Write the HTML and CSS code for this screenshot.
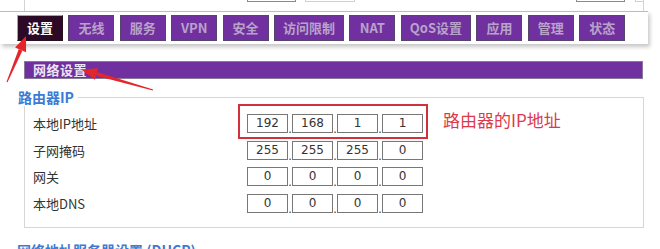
FILE: index.html
```html
<!DOCTYPE html>
<html lang="zh-CN">
<head>
  <meta charset="UTF-8">
  <title>路由器设置</title>
  <link rel="stylesheet" href="styles.css">
</head>
<body>
  <div class="top">
    <span class="stub s1"></span>
    <span class="stub s2"></span>
    <span class="stub s3"></span>
    <span class="stub s4"></span>
  </div>

  <div class="tabbar">
    <a class="tab active">设置</a>
    <a class="tab">无线</a>
    <a class="tab">服务</a>
    <a class="tab">VPN</a>
    <a class="tab">安全</a>
    <a class="tab">访问限制</a>
    <a class="tab">NAT</a>
    <a class="tab">QoS设置</a>
    <a class="tab">应用</a>
    <a class="tab">管理</a>
    <a class="tab">状态</a>
  </div>

  <div class="content">
    <div class="section-title">网络设置</div>

    <div class="group">
      <div class="legend">路由器IP</div>
      <div class="rows">
        <div class="row">
          <span class="label">本地IP地址</span>
          <span class="ip marked">
            <span class="oct">192</span><span class="dot">.</span><span class="oct">168</span><span class="dot">.</span><span class="oct">1</span><span class="dot">.</span><span class="oct">1</span>
          </span>
          <span class="note">路由器的IP地址</span>
        </div>
        <div class="row">
          <span class="label">子网掩码</span>
          <span class="ip">
            <span class="oct">255</span><span class="dot">.</span><span class="oct">255</span><span class="dot">.</span><span class="oct">255</span><span class="dot">.</span><span class="oct">0</span>
          </span>
        </div>
        <div class="row">
          <span class="label">网关</span>
          <span class="ip">
            <span class="oct">0</span><span class="dot">.</span><span class="oct">0</span><span class="dot">.</span><span class="oct">0</span><span class="dot">.</span><span class="oct">0</span>
          </span>
        </div>
        <div class="row">
          <span class="label">本地DNS</span>
          <span class="ip">
            <span class="oct">0</span><span class="dot">.</span><span class="oct">0</span><span class="dot">.</span><span class="oct">0</span><span class="dot">.</span><span class="oct">0</span>
          </span>
        </div>
      </div>
    </div>

    <div class="legend next">网络地址服务器设置 (DHCP)</div>
  </div>

  <!-- annotation arrows -->
  <svg class="arrows" width="660" height="249" viewBox="0 0 660 249">
    <polygon fill="#e3262b" points="6.5,81.8 7.5,82.2 22.4,50.7 18.8,49.1"/>
    <polygon fill="#e3262b" points="26,36 26.1,52.2 15.1,47.6"/>
    <polygon fill="#e3262b" points="152.8,90.6 153.2,89.4 97.05,71.98 95.95,75.8"/>
    <polygon fill="#e3262b" points="82,70 98.15,68.1 94.85,79.7"/>
  </svg>
</body>
</html>
```

FILE: styles.css
```css
body { margin: 0; background: #fff; font-family: "Noto Sans CJK SC", "Noto Sans", sans-serif; color: #333; position: relative; width: 660px; height: 249px; overflow: hidden; }

/* strip left over from the frame above */
.top { margin-left: 24px; width: 618px; height: 11px; border-left: 1px solid #d4d4d4; border-right: 1px solid #d4d4d4; display: flex; align-items: flex-start; }
.stub { display: block; height: 1px; border: 1px solid #8a8a8a; border-top: none; }
.s1 { margin-left: 222px; width: 47px; }
.s2 { margin-left: 9px; width: 48px; border-color: #d0d0d0; }
.s3 { margin-left: 221px; width: 47px; }
.s4 { margin-left: 10px; flex: 1; border-color: #d0d0d0; border-right: none; }

.tabbar { width: 648px; box-sizing: border-box; height: 33px; padding: 3px 0 0 17px; border-top: 1px solid #bdbdbd; display: flex; gap: 5.4px; box-shadow: 2px 3px 4px rgba(0,0,0,0.22); }
.tab { box-sizing: border-box; min-width: 46px; height: 26px; padding: 0 8px; background: #7030a0; border: 1px solid #55456a; color: #b9a2c9; font-weight: bold; font-size: 13px; line-height: 24px; text-align: center; }
.tab.active { background: #2c0a25; color: #fff; border-color: #27101f; border-left-color: #8ea6d2; border-top-color: #8ea6d2; }

.content { padding-top: 17px; }
.section-title { margin-left: 24px; width: 619px; height: 18px; box-sizing: border-box; background: #7030a0; border: 1px solid #8a7a9a; color: #ece4f4; font-weight: bold; font-size: 13px; line-height: 16px; padding-left: 8px; letter-spacing: 0.5px; }

.group { margin: 18px 0 0 24px; width: 618px; border: 1px solid #d6d6d6; padding: 0 0 14px; }
.legend { width: fit-content; height: 17px; margin: -9px 0 0 -7px; padding-right: 4px; background: #fff; color: #3a7bd5; font-weight: bold; font-size: 14px; line-height: 17px; }
.legend.next { margin: 14px 0 0 17px; }

.rows { display: grid; row-gap: 7.67px; padding: 0 0 0 8px; margin-top: 8px; }
.row { display: flex; align-items: center; height: 19px; }
.label { width: 214px; font-size: 13px; color: #333; }
.ip { display: flex; align-items: flex-end; position: relative; }
.oct { box-sizing: border-box; width: 41px; height: 19px; border: 1px solid #777; font-family: "DejaVu Sans", sans-serif; font-size: 12px; line-height: 17px; text-align: center; color: #333; }
.dot { width: 4px; font-size: 11px; line-height: 10px; text-align: center; color: #333; }
.ip.marked::after { content: ""; position: absolute; top: -10px; left: -9px; right: -5px; bottom: -6px; border: 2px solid #d2303c; }
.note { margin: 0 0 7px 20px; color: #dc3a4a; font-size: 17px; line-height: 20px; }

.arrows { position: absolute; left: 0; top: 0; }
```
